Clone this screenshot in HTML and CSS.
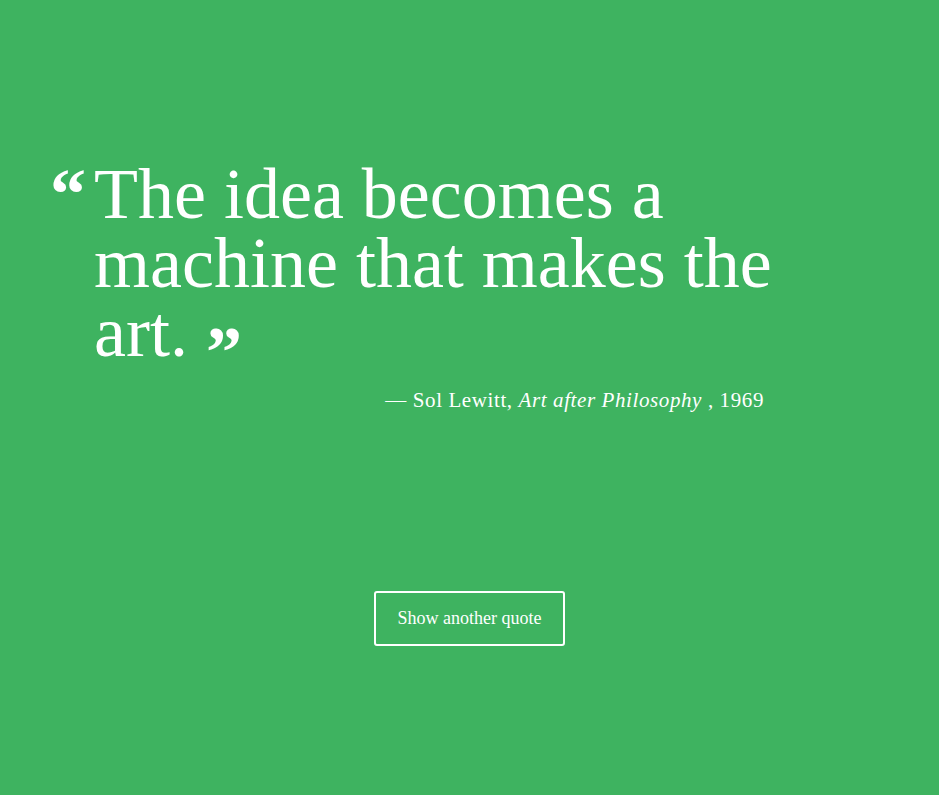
FILE: index.html
```html
<!DOCTYPE html>
<html lang="en">
<head>
<meta charset="utf-8">
<title>Quote</title>
<link rel="stylesheet" href="styles.css">
</head>
<body>
<main class="page">
  <figure class="quote">
    <blockquote class="quote-body">
      <span class="mark mark-open">“</span>
      <p class="quote-text">The idea becomes a machine that makes the art. <span class="mark mark-close">”</span></p>
    </blockquote>
    <figcaption class="attribution">— Sol Lewitt, <cite>Art after Philosophy</cite> , 1969</figcaption>
  </figure>
  <div class="actions">
    <button class="btn" type="button">Show another quote</button>
  </div>
</main>
</body>
</html>
```

FILE: styles.css
```css
html, body {
  margin: 0;
  padding: 0;
}

body {
  background: #3eb360;
  color: #fff;
  font-family: "Liberation Serif", "Times New Roman", serif;
}

.page {
  min-height: 795px;
  display: flex;
  flex-direction: column;
}

.quote {
  margin: 0;
  padding: 160px 0 0 50px;
  width: 740px;
}

.quote-body {
  margin: 0;
  display: flex;
  align-items: flex-start;
}

.mark {
  font-weight: 700;
  font-size: 72px;
  line-height: 69px;
}

.mark-open {
  flex: 0 0 44px;
}

.mark-close {
  line-height: 0;
  vertical-align: -20px;
}

.quote-text {
  margin: 0;
  flex: 1;
  font-size: 72px;
  line-height: 69px;
}

.attribution {
  margin-top: 19px;
  padding-right: 26px;
  text-align: right;
  font-size: 21px;
  line-height: 28px;
  letter-spacing: 0.6px;
}

.attribution cite {
  font-style: italic;
}

.actions {
  display: flex;
  justify-content: center;
  margin-top: 177px;
}

.btn {
  box-sizing: border-box;
  height: 55px;
  padding: 0 22px;
  background: transparent;
  color: #fff;
  border: 2px solid #fff;
  border-radius: 3px;
  font-family: "Liberation Serif", "Times New Roman", serif;
  font-size: 18px;
  cursor: pointer;
}
```
